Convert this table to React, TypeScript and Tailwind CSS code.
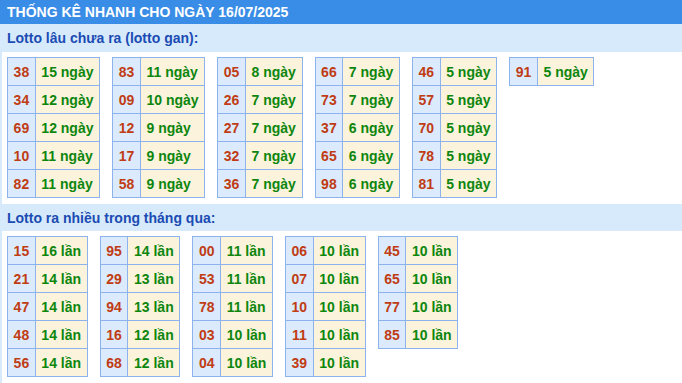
import React from "react";

type Row = [string, string];

const gan: Row[][] = [
  [["38", "15 ngày"], ["34", "12 ngày"], ["69", "12 ngày"], ["10", "11 ngày"], ["82", "11 ngày"]],
  [["83", "11 ngày"], ["09", "10 ngày"], ["12", "9 ngày"], ["17", "9 ngày"], ["58", "9 ngày"]],
  [["05", "8 ngày"], ["26", "7 ngày"], ["27", "7 ngày"], ["32", "7 ngày"], ["36", "7 ngày"]],
  [["66", "7 ngày"], ["73", "7 ngày"], ["37", "6 ngày"], ["65", "6 ngày"], ["98", "6 ngày"]],
  [["46", "5 ngày"], ["57", "5 ngày"], ["70", "5 ngày"], ["78", "5 ngày"], ["81", "5 ngày"]],
  [["91", "5 ngày"]],
];

const nhieu: Row[][] = [
  [["15", "16 lần"], ["21", "14 lần"], ["47", "14 lần"], ["48", "14 lần"], ["56", "14 lần"]],
  [["95", "14 lần"], ["29", "13 lần"], ["94", "13 lần"], ["16", "12 lần"], ["68", "12 lần"]],
  [["00", "11 lần"], ["53", "11 lần"], ["78", "11 lần"], ["03", "10 lần"], ["04", "10 lần"]],
  [["06", "10 lần"], ["07", "10 lần"], ["10", "10 lần"], ["11", "10 lần"], ["39", "10 lần"]],
  [["45", "10 lần"], ["65", "10 lần"], ["77", "10 lần"], ["85", "10 lần"]],
];

function Table({ rows }: { rows: Row[] }) {
  return (
    <div className="grid grid-cols-[auto_auto] border-t border-l border-[#8cb3ee]">
      {rows.map(([n, v], i) => (
        <React.Fragment key={i}>
          <div className="h-[28px] px-[5.6px] flex items-center justify-center border-r border-b border-[#8cb3ee] bg-[#dbebfd] text-[#c03c14]">
            {n}
          </div>
          <div className="h-[28px] px-[5.6px] flex items-center justify-start border-r border-b border-[#8cb3ee] bg-[#fcf3dc] text-[#0d860e]">
            {v}
          </div>
        </React.Fragment>
      ))}
    </div>
  );
}

export default function App() {
  return (
    <div className="w-[682px] h-[383px] overflow-hidden bg-white font-['Liberation_Sans',Arial,sans-serif] font-bold text-[14px] leading-none">
      <div className="h-[24px] bg-[#3a8de6] text-white flex items-center px-[7px]">
        THỐNG KÊ NHANH CHO NGÀY 16/07/2025
      </div>
      <div className="h-[28px] bg-[#d7eafb] text-[#1b4cb3] flex items-center px-[7px]">
        Lotto lâu chưa ra (lotto gan):
      </div>
      <div className="flex items-start gap-[12px] border-l-2 border-[#d7eafb] pl-[5px] pt-[5px] pb-[6px]">
        {gan.map((t, i) => (
          <Table key={i} rows={t} />
        ))}
      </div>
      <div className="h-[27px] bg-[#d7eafb] text-[#1b4cb3] flex items-center px-[7px]">
        Lotto ra nhiều trong tháng qua:
      </div>
      <div className="flex items-start gap-[12px] border-l-2 border-[#d7eafb] pl-[5px] pt-[5px] pb-[6px]">
        {nhieu.map((t, i) => (
          <Table key={i} rows={t} />
        ))}
      </div>
    </div>
  );
}
